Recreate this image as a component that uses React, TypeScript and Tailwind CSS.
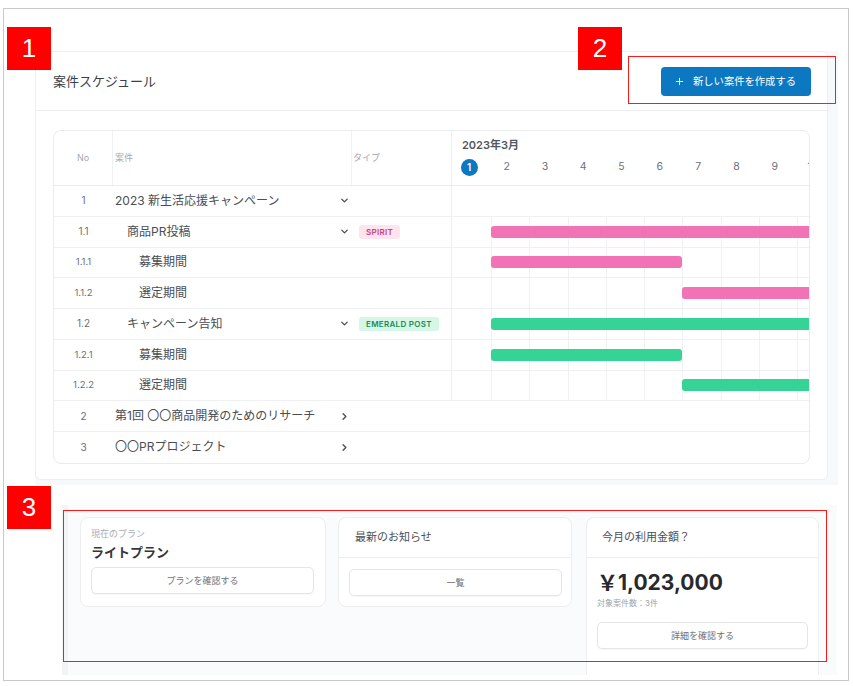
import React from "react";
import { ChevronDown, ChevronRight, Plus } from "lucide-react";

type Row = {
  no: string;
  name: string;
  level: 0 | 1 | 2;
  chevron?: "down" | "right";
  badge?: "spirit" | "emerald";
  grid: boolean;
  bar?: { color: "pink" | "green"; span: "full" | "first" | "second" };
};

const rows: Row[] = [
  { no: "1", name: "2023 新生活応援キャンペーン", level: 0, chevron: "down", grid: false },
  { no: "1.1", name: "商品PR投稿", level: 1, chevron: "down", badge: "spirit", grid: true, bar: { color: "pink", span: "full" } },
  { no: "1.1.1", name: "募集期間", level: 2, grid: true, bar: { color: "pink", span: "first" } },
  { no: "1.1.2", name: "選定期間", level: 2, grid: true, bar: { color: "pink", span: "second" } },
  { no: "1.2", name: "キャンペーン告知", level: 1, chevron: "down", badge: "emerald", grid: true, bar: { color: "green", span: "full" } },
  { no: "1.2.1", name: "募集期間", level: 2, grid: true, bar: { color: "green", span: "first" } },
  { no: "1.2.2", name: "選定期間", level: 2, grid: true, bar: { color: "green", span: "second" } },
  { no: "2", name: "第1回 〇〇商品開発のためのリサーチ", level: 0, chevron: "right", grid: false },
  { no: "3", name: "〇〇PRプロジェクト", level: 0, chevron: "right", grid: false },
];

const days = [1, 2, 3, 4, 5, 6, 7, 8, 9, 10];

const indent = {
  0: "pl-[2px]",
  1: "pl-[14px]",
  2: "pl-[26px]",
};

const barSpan = {
  full: "ml-[39px] w-[400px]",
  first: "ml-[39px] w-[191px]",
  second: "ml-[230px] w-[200px]",
};

const barColor = {
  pink: "bg-[#f273b5]",
  green: "bg-[#36d396]",
};

// grid lines behind the gantt bars
const GanttGrid = () => (
  <div className="absolute inset-0 flex">
    <div className="w-[39px] shrink-0" />
    {days.slice(1).map((d) => (
      <div key={d} className="w-[38.3px] shrink-0 border-l border-[#f0f1f4]" />
    ))}
  </div>
);

const Badge = ({ kind }: { kind: "spirit" | "emerald" }) =>
  kind === "spirit" ? (
    <span className="px-[7px] h-[14px] flex items-center rounded-[3px] bg-[#fde4ef] text-[#c8437e] text-[8px] font-semibold tracking-[0.3px]">
      SPIRIT
    </span>
  ) : (
    <span className="px-[7px] h-[14px] flex items-center rounded-[3px] bg-[#d5f7e6] text-[#1c8a5a] text-[8px] font-semibold tracking-[0.3px]">
      EMERALD POST
    </span>
  );

const ScheduleTable = () => (
  <div className="w-[757px] rounded-lg border border-[#e9ebee] overflow-hidden bg-white">
    {/* header */}
    <div className="flex h-[55px] border-b border-[#e9ebee]">
      <div className="w-[59px] shrink-0 flex items-center justify-center border-r border-[#f0f1f3] text-[9px] text-[#a3a7ad]">
        No
      </div>
      <div className="w-[239px] shrink-0 flex items-center pl-[2px] border-r border-[#f0f1f3] text-[9px] text-[#a3a7ad]">
        案件
      </div>
      <div className="w-[99px] shrink-0 flex items-center pl-[1px] text-[9px] text-[#a3a7ad]">
        タイプ
      </div>
      <div className="flex-1 flex flex-col border-l border-[#eceef1] overflow-hidden">
        <div className="pt-[6px] pl-[10px] h-[22px] leading-[16px] text-[11px] font-semibold text-[#505760]">
          2023年3月
        </div>
        <div className="mt-[4px] h-[20px] flex">
          {days.map((d) => (
            <div
              key={d}
              className={`${d === 1 ? "w-[39px] pr-[5px]" : "w-[38.3px] pr-[7px]"} shrink-0 flex items-center justify-center text-[10.5px] text-[#6b7179]`}
            >
              {d === 1 ? (
                <span className="w-[17px] h-[17px] rounded-full bg-[#0b78c1] text-white font-semibold flex items-center justify-center text-[10px]">
                  1
                </span>
              ) : (
                d
              )}
            </div>
          ))}
        </div>
      </div>
    </div>

    {/* rows */}
    {rows.map((r, i) => (
      <div
        key={r.no}
        className={`flex h-[30.75px] ${i < rows.length - 1 ? "border-b border-[#eef0f2]" : ""}`}
      >
        <div className={`w-[59px] shrink-0 flex items-center justify-center text-[#6a6f76] ${r.level === 2 ? "text-[9.5px]" : "text-[10px]"}`}>
          {r.no}
        </div>
        <div className={`w-[239px] shrink-0 flex items-center justify-between pr-[2px] ${indent[r.level]}`}>
          <span className="text-[12px] text-[#4a4e54]">{r.name}</span>
          {r.chevron === "down" && <ChevronDown className="w-[11px] h-[11px] text-[#4b5058]" strokeWidth={3} />}
          {r.chevron === "right" && <ChevronRight className="w-[11px] h-[11px] text-[#4b5058]" strokeWidth={3} />}
        </div>
        <div className="w-[99px] shrink-0 flex items-center pl-[7px]">
          {r.badge && <Badge kind={r.badge} />}
        </div>
        <div
          className={`flex-1 relative flex items-center overflow-hidden ${r.no === "2" || r.no === "3" ? "" : "border-l border-[#eceef1]"}`}
        >
          {r.grid && <GanttGrid />}
          {r.bar && (
            <div className={`relative h-[12px] shrink-0 rounded-[3px] ${barSpan[r.bar.span]} ${barColor[r.bar.color]}`} />
          )}
        </div>
      </div>
    ))}
  </div>
);

const OutlineButton = ({ label, width }: { label: string; width: string }) => (
  <button className={`${width} h-[27px] rounded-[5px] border border-[#e3e5e8] bg-white text-[9px] text-[#6c7178] flex items-center justify-center shadow-[0_1px_1px_rgba(0,0,0,0.03)]`}>
    {label}
  </button>
);

const App = () => {
  return (
    <div className="relative w-[853px] h-[686px] bg-white pt-[8px] pl-[3px] overflow-hidden font-['Inter','Noto_Sans_CJK_JP',sans-serif]">
      <div className="w-[846px] h-[673px] border-[1.5px] border-[#c9c9c9] pt-[42px] pl-[31px] overflow-hidden">
        {/* 1: schedule */}
        <div className="w-[803px] h-[434px] bg-[#f7f8fa] pr-[10px] pb-[5px]">
          <div className="h-full bg-white border border-[#eceef1] rounded-md">
            <div className="h-[59px] flex items-center justify-between pl-[17px] pr-[16px] border-b border-[#eceef1]">
              <h2 className="text-[13px] text-[#3b3f45] pt-[2px]">案件スケジュール</h2>
              <button className="w-[150px] h-[29px] rounded-[4px] bg-[#0b78c1] text-white text-[10.3px] flex items-center justify-center gap-[8px] pr-[2px] mt-[1px]">
                <Plus className="w-[11px] h-[11px]" strokeWidth={2} />
                新しい案件を作成する
              </button>
            </div>
            <div className="pt-[19px] pl-[17px]">
              <ScheduleTable />
            </div>
          </div>
        </div>

        {/* 3: summary cards */}
        <div className="mt-[20px] ml-[27px] w-[775px] h-[170px] bg-[#fafbfc] border-l-[6px] border-[#f3f4f6] pt-[12px] pl-[12px] flex items-start gap-[12px] overflow-hidden">
          <div className="w-[246px] h-[90px] bg-white border border-[#eceef1] rounded-lg px-[10px] pt-[10px]">
            <div className="text-[9px] leading-[12px] text-[#a9adb3]">現在のプラン</div>
            <div className="mt-[2px] text-[13px] leading-[20px] font-bold text-[#33373c]">ライトプラン</div>
            <div className="mt-[5px]">
              <OutlineButton label="プランを確認する" width="w-[223px]" />
            </div>
          </div>

          <div className="w-[234px] h-[90px] bg-white border border-[#eceef1] rounded-lg">
            <div className="h-[40px] border-b border-[#eceef1] flex items-center pl-[16px] text-[11px] text-[#4a4e54]">
              最新のお知らせ
            </div>
            <div className="pt-[11px] pl-[10px]">
              <OutlineButton label="一覧" width="w-[213px]" />
            </div>
          </div>

          <div className="ml-[2px] w-[233px] h-[170px] shrink-0 bg-white border border-[#eceef1] rounded-lg">
            <div className="h-[40px] border-b border-[#eceef1] flex items-center pl-[15px] text-[11px] text-[#4a4e54]">
              今月の利用金額？
            </div>
            <div className="pl-[10px] pt-[12px]">
              <div className="text-[21px] leading-[26px] font-bold text-[#26292d]">￥1,023,000</div>
              <div className="mt-[2px] text-[8px] leading-[11px] text-[#9fa3a9]">対象案件数：3件</div>
              <div className="mt-[13px]">
                <OutlineButton label="詳細を確認する" width="w-[211px]" />
              </div>
            </div>
          </div>
        </div>
      </div>

      {/* annotation overlays */}
      <div className="absolute left-[7px] top-[27px] w-[44px] h-[43px] bg-[#ff0000] text-white text-[26px] flex items-center justify-center font-['Liberation_Sans',Arial,sans-serif]">
        1
      </div>
      <div className="absolute left-[578px] top-[27px] w-[44px] h-[43px] bg-[#ff0000] text-white text-[26px] flex items-center justify-center font-['Liberation_Sans',Arial,sans-serif]">
        2
      </div>
      <div className="absolute left-[7px] top-[486px] w-[44px] h-[43px] bg-[#ff0000] text-white text-[26px] flex items-center justify-center font-['Liberation_Sans',Arial,sans-serif]">
        3
      </div>
      <div className="absolute left-[628px] top-[56px] w-[208px] h-[48px] border-[1.5px] border-[#ff1a1a]" />
      <div className="absolute left-[63px] top-[510px] w-[764px] h-[152px] border-[1.5px] border-[#ff1a1a]" />
    </div>
  );
};

export default App;
